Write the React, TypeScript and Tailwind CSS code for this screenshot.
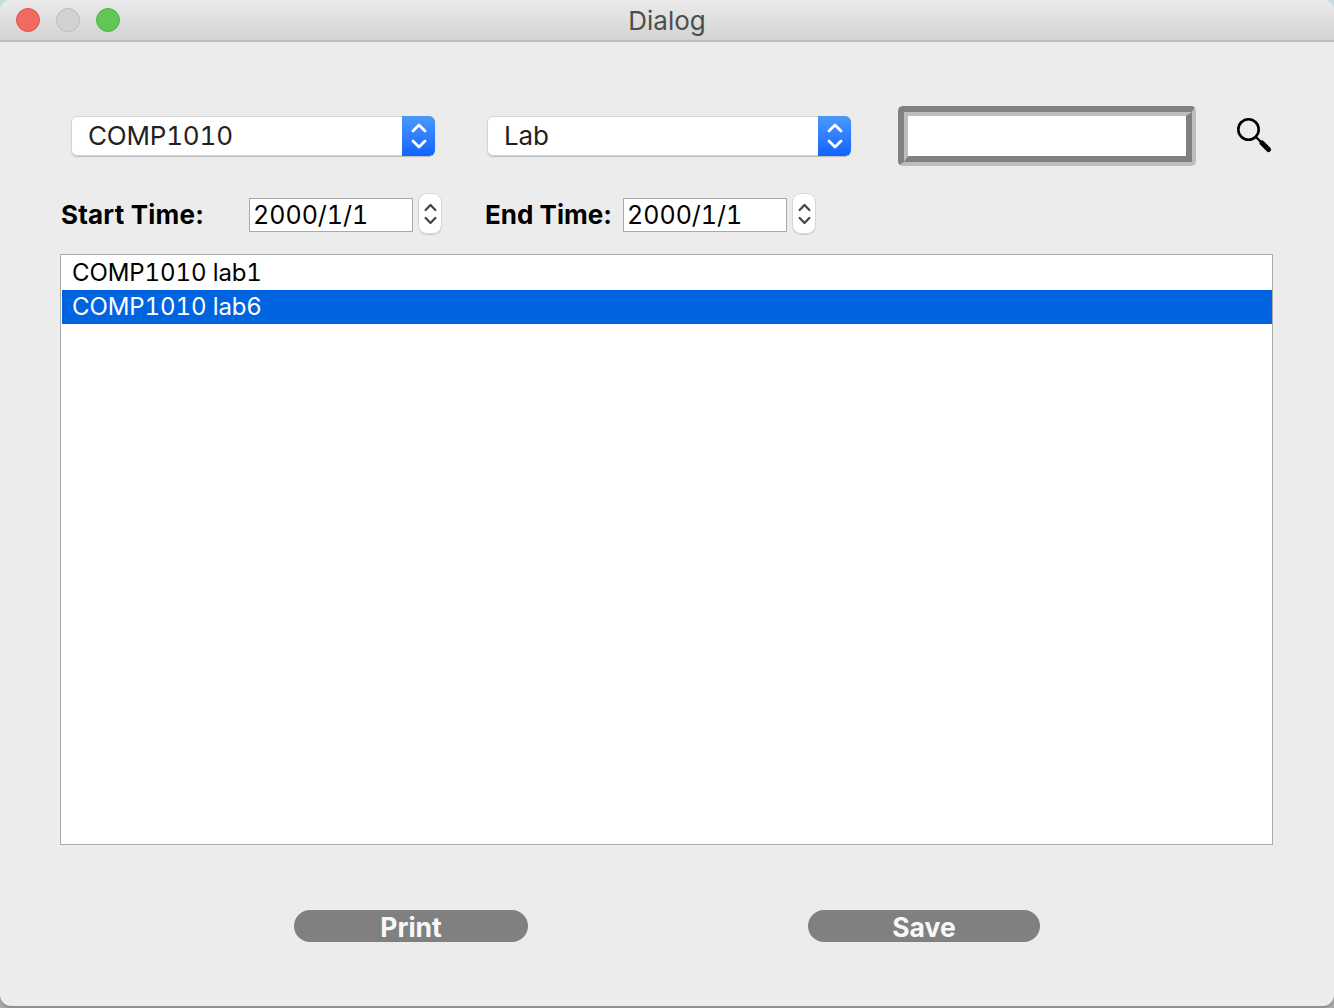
const sans = 'font-["Inter","Liberation_Sans",sans-serif]';

function UpDown({ className, weight = 2.4 }: { className: string; weight?: number }) {
  return (
    <svg viewBox="0 0 16 30" fill="none" stroke="currentColor" strokeWidth={weight} strokeLinecap="round" strokeLinejoin="round" className={className}>
      <path d="M2 10 L8 4 L14 10" />
      <path d="M2 20 L8 26 L14 20" />
    </svg>
  );
}

function Combo({ label }: { label: string }) {
  return (
    <div className="flex h-10 w-[364px] rounded-[6px] bg-white shadow-[inset_0_0_0_1px_#d4d4d4,0_1px_1px_rgba(0,0,0,0.2)]">
      <div className="flex-1 pl-[17px] text-[26px] leading-[40px] tracking-[-0.2px] text-[#222222] tabular-nums">{label}</div>
      <div className="flex w-[33px] items-center justify-center rounded-r-[6px] bg-gradient-to-b from-[#4c98fb] to-[#0f62fe] text-white">
        <UpDown className="h-[30px] w-4" weight={2.8} />
      </div>
    </div>
  );
}

function DateField() {
  return (
    <div className="flex items-center">
      <div className="h-[34px] w-[164px] border border-[#a9a9a9] bg-white pl-[3px] text-[25px] leading-[32px] text-black tabular-nums">2000/1/1</div>
      <div className="ml-[5px] flex h-[41px] w-6 -translate-y-px items-center justify-center rounded-[9px] bg-white text-[#444444] shadow-[inset_0_0_0_1px_#d6d6d6,0_1px_1px_rgba(0,0,0,0.15)]">
        <UpDown className="h-[30px] w-[13px]" weight={2.8} />
      </div>
    </div>
  );
}

function PillButton({ label, width }: { label: string; width: string }) {
  return (
    <button className={`h-8 rounded-full bg-[#808080] text-[26.5px] leading-[34px] font-bold text-[#f8f8f8] ${width}`}>
      {label}
    </button>
  );
}

export default function App() {
  return (
    <div className={`h-[1008px] w-[1334px] overflow-hidden bg-gradient-to-b from-[#c9dcdc] to-[#a8a8a8] ${sans}`}>
      <div className="flex h-[1006px] flex-col rounded-[11px] bg-[#ececec] shadow-[0_2px_1px_#8f8f8f]">
        {/* title bar */}
        <div className="relative flex h-[42px] shrink-0 items-center justify-center rounded-t-[11px] border-b-2 border-[#bcbcbc] bg-gradient-to-b from-[#ebebeb] to-[#d3d3d3]">
          <div className="absolute top-[8px] left-[16px] flex gap-4">
            <span className="h-6 w-6 rounded-full border border-[#e0534a] bg-[#f16a60]" />
            <span className="h-6 w-6 rounded-full border border-[#bcbcbc] bg-[#d2d2d2]" />
            <span className="h-6 w-6 rounded-full border border-[#4fb247] bg-[#60c757]" />
          </div>
          <span className="pt-px text-[26px] leading-none text-[#4d4d4d]">Dialog</span>
        </div>

        {/* filters */}
        <div className="mt-16 flex h-[60px] items-center pl-[71px]">
          <Combo label="COMP1010" />
          <div className="ml-[52px]">
            <Combo label="Lab" />
          </div>
          <div className="ml-[47px] h-[60px] w-[298px] rounded-[5px] border-[6px] border-t-[#808080] border-r-[#bdbdbd] border-b-[#bdbdbd] border-l-[#808080] border-r-[4px] border-b-[4px]">
            <div className="h-full border-[4px] border-t-[#bdbdbd] border-r-[#808080] border-b-[#808080] border-l-[#bdbdbd] border-r-[6px] border-b-[6px] bg-white" />
          </div>
          <svg viewBox="0 0 36 36" fill="none" stroke="#000000" strokeLinecap="round" className="ml-10 h-9 w-9">
            <circle cx="12.5" cy="11.5" r="10.2" strokeWidth="2.6" />
            <path d="M20 19 L25 24" strokeWidth="2.2" />
            <path d="M26 25 L32.5 31.5" strokeWidth="5" />
          </svg>
        </div>

        {/* date range */}
        <div className="mt-7 flex h-[41px] items-center pl-[61px]">
          <span className="w-[188px] text-[26px] font-bold tracking-[0.2px] text-black">Start Time:</span>
          <DateField />
          <span className="ml-[43px] w-[138px] text-[26px] font-bold text-black">End Time:</span>
          <DateField />
        </div>

        {/* results */}
        <div className="mt-[19px] ml-[60px] h-[591px] w-[1213px] border border-[#ababab] bg-white pt-px pl-px">
          <div className="h-[34px] pl-[10px] text-[24px] leading-[34px] tracking-[-0.1px] text-black tabular-nums">COMP1010 lab1</div>
          <div className="h-[34px] bg-[#0064e1] pl-[10px] text-[24px] leading-[34px] tracking-[-0.1px] text-white tabular-nums">COMP1010 lab6</div>
        </div>

        {/* actions */}
        <div className="mt-[65px] flex pl-[294px]">
          <PillButton label="Print" width="w-[234px]" />
          <div className="ml-[280px]">
            <PillButton label="Save" width="w-[232px]" />
          </div>
        </div>
      </div>
    </div>
  );
}
